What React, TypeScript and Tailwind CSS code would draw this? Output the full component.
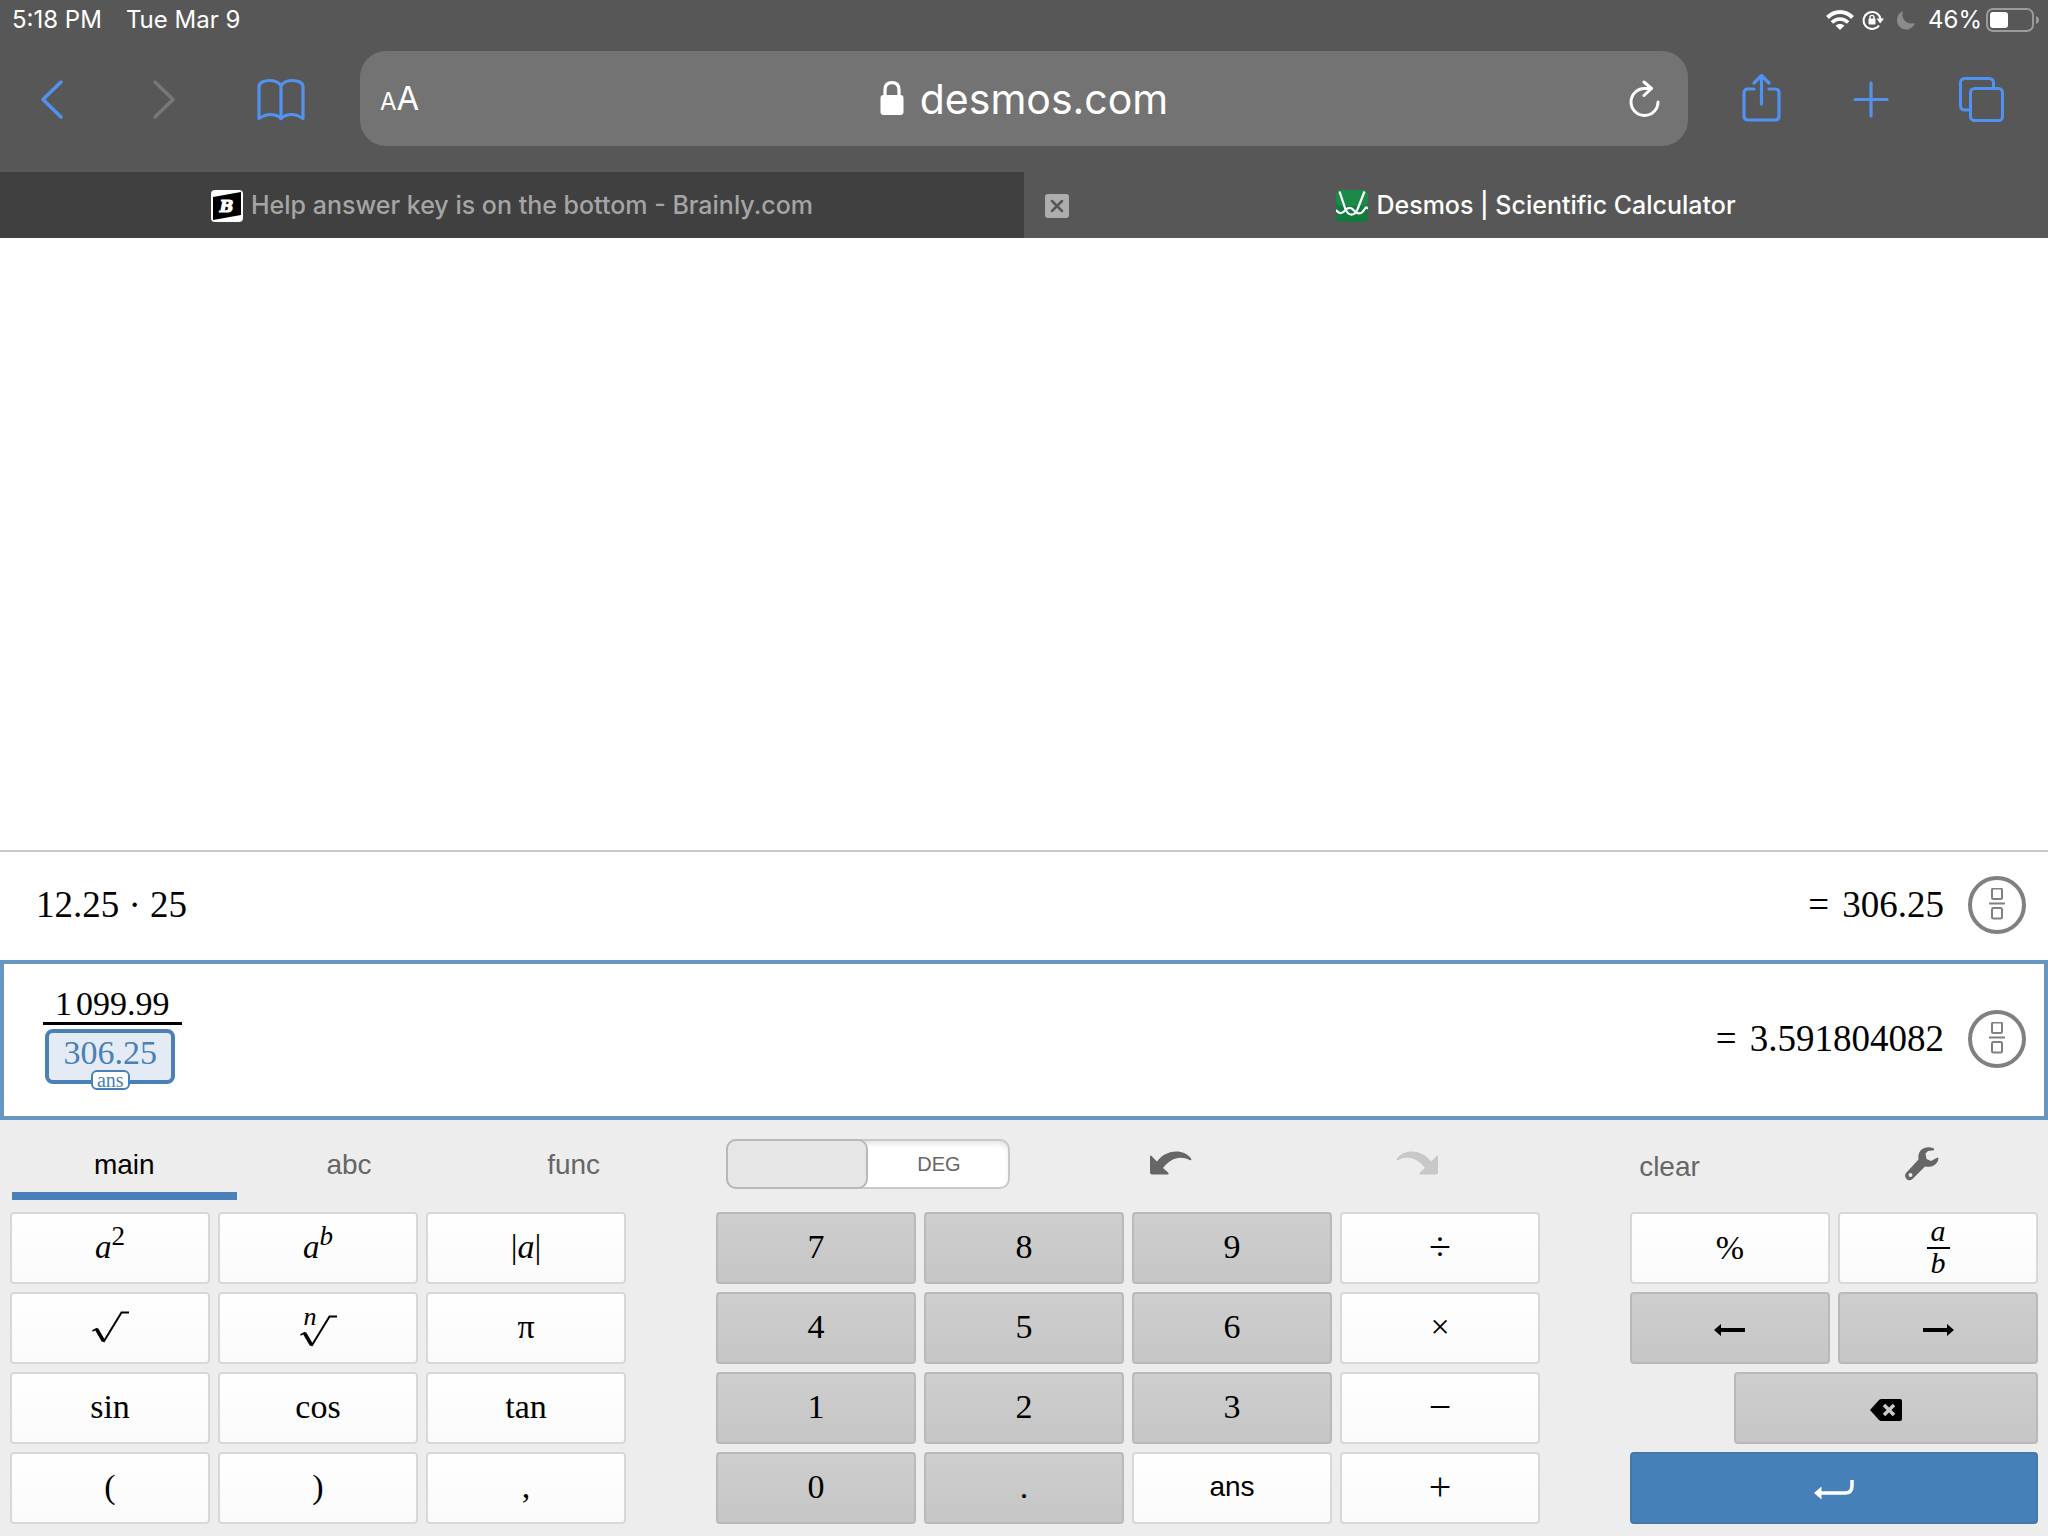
import React, { useState } from 'react';

interface CalcKey {
    label: React.ReactNode;
    name: string;
    variant?: 'light' | 'dark' | 'primary';
    className?: string;
}

interface KeyButtonProps {
    item: CalcKey;
}

const keyStyles = {
    light: 'border-[#d8d8d8] bg-linear-to-b from-white to-[#fafafa] text-black',
    dark: 'border-[#b9b9b9] bg-linear-to-b from-[#cecece] to-[#c6c6c6] text-black',
    primary: 'border-[#4478ab] bg-[#4580b9] text-white',
};

// ---------------Icons---------------//
const BackIcon = () => (
    <svg width="48" height="48" viewBox="0 0 48 48" fill="none" stroke="currentColor" strokeWidth="3.500" strokeLinecap="round" strokeLinejoin="round">
        <path d="M33 7 15 24.500 33 42" />
    </svg>
);

const ForwardIcon = () => (
    <svg width="48" height="48" viewBox="0 0 48 48" fill="none" stroke="currentColor" strokeWidth="3.500" strokeLinecap="round" strokeLinejoin="round">
        <path d="M12 7 30 24.500 12 42" />
    </svg>
);

const BookIcon = () => (
    <svg width="48" height="48" viewBox="0 0 48 48" fill="none" stroke="currentColor" strokeWidth="3.200" strokeLinejoin="round">
        <path d="M24 10.500C21.500 7 17.500 5.500 12.500 5.500 7.500 5.500 2 7.500 2 11.500V43.500C6 41 9 39.500 13 39.500 18 39.500 21.500 41 24 43.500 26.500 41 30 39.500 35 39.500 39 39.500 42 41 46 43.500V11.500C46 7.500 40.500 5.500 35.500 5.500 30.500 5.500 26.500 7 24 10.500ZM24 10.500V43.500" />
    </svg>
);

const ShareIcon = () => (
    <svg width="48" height="52" viewBox="0 0 48 52" fill="none" stroke="currentColor" strokeWidth="3.200" strokeLinecap="round" strokeLinejoin="round">
        <path d="M16 16H10Q6 16 6 20V43Q6 47 10 47H37Q41 47 41 43V20Q41 16 37 16H31" />
        <path d="M23.500 31V2.500M16 10 23.500 2.500 31 10" />
    </svg>
);

const PlusIcon = () => (
    <svg width="48" height="48" viewBox="0 0 48 48" fill="none" stroke="currentColor" strokeWidth="3.200" strokeLinecap="round">
        <path d="M23 8V41M7 24.500H39" />
    </svg>
);

const TabsIcon = () => (
    <svg width="48" height="48" viewBox="0 0 48 48" fill="none" stroke="currentColor" strokeWidth="3">
        <path d="M12 35H7Q2.500 35 2.500 30.500V8Q2.500 3.500 7 3.500H31Q35.500 3.500 35.500 8V13" />
        <rect x="12.500" y="13.500" width="32" height="32" rx="4" />
    </svg>
);

const LockIcon = () => (
    <svg width="24" height="36" viewBox="0 0 24 36">
        <path d="M5 16V9C5 4 8 1.700 12 1.700S19 4 19 9V16" fill="none" stroke="white" strokeWidth="3.200" />
        <rect x="0.500" y="14" width="23" height="20" rx="3" fill="white" />
    </svg>
);

const ReloadIcon = () => (
    <svg width="32" height="38" viewBox="0 0 32 38" fill="none" stroke="white" strokeWidth="3" strokeLinecap="round" strokeLinejoin="round">
        <path d="M30 22A13.500 13.500 0 1 1 16.500 8.500H23" />
        <path d="M16 2 23.500 8.500 16 15.500" />
    </svg>
);

const WifiIcon = () => (
    <svg width="28" height="22" viewBox="0 0 28 22" fill="none" stroke="white" strokeWidth="4">
        <path d="M1.500 8.500C8.500 1.200 19.500 1.200 26.500 8.500" />
        <path d="M6 13.500C10.500 8.800 17.500 8.800 22 13.500" strokeWidth="3.600" />
        <path d="M14 21 9.500 16.500C12 14.400 16 14.400 18.500 16.500Z" fill="white" stroke="none" />
    </svg>
);

const RotationLockIcon = () => (
    <svg width="22" height="20" viewBox="0 0 22 20" fill="none">
        <path d="M17 15.500A8.500 8.500 0 1 1 18.500 9" stroke="white" strokeWidth="2" />
        <path d="M14.500 8.500H22L18.200 13.500Z" fill="white" />
        <rect x="6.500" y="8.500" width="7" height="6" rx="1" fill="white" />
        <path d="M8 9V7.500C8 4.700 12 4.700 12 7.500V9" stroke="white" strokeWidth="1.400" />
    </svg>
);

const MoonIcon = () => (
    <svg width="20" height="20" viewBox="0 0 20 20">
        <path d="M7 1C4.500 8.500 10.500 15.500 19 13 17.500 17 14 19.500 10.200 19.500 5 19.500 1 15.500 1 10.300 1 6 3.300 2.500 7 1Z" fill="#8b8b8b" />
    </svg>
);

const BatteryIcon = () => (
    <svg width="54" height="24" viewBox="0 0 54 24">
        <rect x="1" y="1" width="46" height="22" rx="6" fill="none" stroke="#9a9a9a" strokeWidth="2" />
        <rect x="4" y="4" width="18" height="16" rx="3" fill="white" />
        <path d="M50 8Q53 9 53 12T50 16Z" fill="#9a9a9a" />
    </svg>
);

const BrainlyIcon = () => (
    <svg width="32" height="32" viewBox="0 0 32 32">
        <rect width="32" height="32" rx="4" fill="white" />
        <path d="M2 7 30 2V25L2 30Z" fill="black" />
        <text x="15.500" y="22" textAnchor="middle" fill="white" stroke="white" strokeWidth="1.200" fontSize="16" fontWeight="bold" fontStyle="italic" fontFamily="DejaVu Serif, serif">B</text>
    </svg>
);

const DesmosIcon = () => (
    <svg width="32" height="32" viewBox="0 0 32 32" fill="none">
        <rect width="32" height="32" rx="5" fill="#127a3c" />
        <rect width="32" height="16" rx="5" fill="#1b8a48" />
        <path d="M3.500 1.500 9 18C12 26.500 19 27 22 18L28.500 1.500" stroke="white" strokeWidth="2.200" />
        <path d="M0 20C3 24 6 24 9 20.500S15 17 18 20.500 25 25 28 20 30.500 18.500 32 18" stroke="white" strokeWidth="2.200" />
    </svg>
);

const CloseTabIcon = () => (
    <svg width="24" height="24" viewBox="0 0 24 24">
        <rect width="24" height="24" rx="3" fill="#adadad" />
        <path d="M7 7 17 17M17 7 7 17" stroke="#575757" strokeWidth="2.500" strokeLinecap="round" />
    </svg>
);

const FractionIcon = () => (
    <svg width="18" height="34" viewBox="0 0 18 34" fill="none" stroke="#808080" strokeWidth="2">
        <rect x="4" y="0.500" width="10" height="10.500" rx="1.500" />
        <path d="M1 15.500H17" />
        <rect x="4" y="20" width="10" height="10.500" rx="1.500" />
    </svg>
);

const UndoIcon = () => (
    <svg width="42" height="32" viewBox="0 0 42 32" fill="currentColor">
        <path d="M0 6.500Q0 5 1.500 6L7 11.500C16-1 34-1.500 41 8.500 42 10 41 10.800 39.500 10 30 5 20 8.500 13 18L18 22.500Q19.500 24.500 17.500 24.500H2Q0 24.500 0 22.500Z" />
    </svg>
);

const RedoIcon = () => (
    <svg width="42" height="32" viewBox="0 0 42 32" fill="currentColor">
        <path d="M42 6.500Q42 5 40.500 6L35 11.500C26-1 8-1.500 1 8.500 0 10 1 10.800 2.500 10 12 5 22 8.500 29 18L24 22.500Q22.500 24.500 24.500 24.500H40Q42 24.500 42 22.500Z" />
    </svg>
);

const WrenchIcon = () => (
    <svg width="36" height="36" viewBox="0 0 36 36" fill="currentColor" fillRule="evenodd">
        <path d="M30 2.500C22-1 13 3 14.500 13.500L2 27C-1 30.500 4 36.500 8 33.500L21 20.500C28 22 34 18 34.500 12.500Q34 11 32.500 12L27 15 22.500 13 21.500 7.500 24 5 30 4.300ZM6.500 27A2 2 0 1 0 6.500 31 2 2 0 1 0 6.500 27Z" />
    </svg>
);

const RootIcon = () => (
    <svg width="37" height="32" viewBox="0 0 37 32" fill="none" stroke="currentColor">
        <path d="M0.500 20 5 17.500" strokeWidth="1.500" />
        <path d="M4.500 18 11.500 30" strokeWidth="3.500" />
        <path d="M11.500 31 29.500 1.500H37" strokeWidth="2" />
    </svg>
);

const ArrowIcon = ({ flip }: { flip?: boolean }) => (
    <svg width="32" height="14" viewBox="0 0 32 14" fill="currentColor">
        <path d={flip ? 'M32 7 25 1V5H1V9H25V13Z' : 'M0 7 7 1V5H31V9H7V13Z'} />
    </svg>
);

const BackspaceIcon = () => (
    <svg width="32" height="22" viewBox="0 0 32 22">
        <path d="M0 11 9 1Q10 0 11.500 0H30Q32 0 32 2V20Q32 22 30 22H11.500Q10 22 9 21Z" fill="black" />
        <path d="M14 6 24 16M24 6 14 16" stroke="#cacaca" strokeWidth="3.500" />
    </svg>
);

const EnterIcon = () => (
    <svg width="40" height="20" viewBox="0 0 40 20">
        <path d="M5 13H31Q38 13 38 6V0" fill="none" stroke="white" strokeWidth="3.500" />
        <path d="M0 13 7.500 6.500V19.500Z" fill="white" />
    </svg>
);

// ---------------Key Data---------------//
const italic = 'text-[33px] italic leading-9';
const operator = 'text-[40px]';

const mainKeys: CalcKey[] = [
    { name: 'a squared', label: <span className={italic}>a<sup className="text-[27px] not-italic">2</sup></span> },
    { name: 'a to the b', label: <span className={italic}>a<sup className="text-[27px]">b</sup></span> },
    { name: 'absolute value', label: <span>|<i>a</i>|</span> },
    { name: 'square root', label: <RootIcon /> },
    {
        name: 'nth root',
        label: (
            <span className="relative pt-2">
                <i className="absolute left-1 -top-1 text-[26px] leading-7">n</i>
                <RootIcon />
            </span>
        ),
    },
    { name: 'pi', label: 'π' },
    { name: 'sin', label: 'sin' },
    { name: 'cos', label: 'cos' },
    { name: 'tan', label: 'tan' },
    { name: 'left parenthesis', label: '(' },
    { name: 'right parenthesis', label: ')' },
    { name: 'comma', label: ',' },
];

const numberKeys: CalcKey[] = [
    { name: '7', label: '7', variant: 'dark' },
    { name: '8', label: '8', variant: 'dark' },
    { name: '9', label: '9', variant: 'dark' },
    { name: 'divide', label: <span className={operator}>÷</span> },
    { name: '4', label: '4', variant: 'dark' },
    { name: '5', label: '5', variant: 'dark' },
    { name: '6', label: '6', variant: 'dark' },
    { name: 'multiply', label: '×' },
    { name: '1', label: '1', variant: 'dark' },
    { name: '2', label: '2', variant: 'dark' },
    { name: '3', label: '3', variant: 'dark' },
    { name: 'minus', label: <span className={operator}>−</span> },
    { name: '0', label: '0', variant: 'dark' },
    { name: 'decimal point', label: '.', variant: 'dark' },
    { name: 'ans', label: <span className="font-['Liberation_Sans',sans-serif] text-[28px]">ans</span> },
    { name: 'plus', label: <span className={operator}>+</span> },
];

const actionKeys: CalcKey[] = [
    { name: 'percent', label: '%', className: 'col-span-2' },
    {
        name: 'fraction',
        label: (
            <span className="flex flex-col items-center text-[30px] italic leading-7">
                <span className="border-b-2 border-black px-1 pb-1 leading-6">a</span>
                <span>b</span>
            </span>
        ),
        className: 'col-span-2',
    },
    { name: 'left', label: <ArrowIcon />, variant: 'dark', className: 'col-span-2 pt-1' },
    { name: 'right', label: <ArrowIcon flip />, variant: 'dark', className: 'col-span-2 pt-1' },
    { name: 'backspace', label: <BackspaceIcon />, variant: 'dark', className: 'col-start-2 col-span-3 pt-1' },
    { name: 'enter', label: <EnterIcon />, variant: 'primary', className: 'col-span-4 pt-1' },
];

const KeyButton: React.FC<KeyButtonProps> = ({ item }) => (
    <button
        type="button"
        aria-label={item.name}
        className={`flex h-[72px] items-center justify-center rounded-sm border-2 font-['Liberation_Serif',serif] text-[34px] leading-10 ${keyStyles[item.variant ?? 'light']} ${item.className ?? 'pb-[2px]'}`}
    >
        {item.label}
    </button>
);

const FractionToggle = () => (
    <button type="button" aria-label="Show as fraction" className="flex size-[58px] items-center justify-center rounded-full border-4 border-[#808080]">
        <FractionIcon />
    </button>
);

const App: React.FC = () => {
    // ---------------UseState Variable---------------//
    const [url, setUrl] = useState('desmos.com');
    const [activeTab, setActiveTab] = useState('main');
    const [degrees, setDegrees] = useState(true);

    return (
        <div className="flex min-h-screen flex-col bg-white font-['Inter',sans-serif]">
            <header className="bg-[#575757] text-white">
                {/* Status bar */}
                <div className="flex h-10 items-center justify-between pl-3 pr-2 text-2xl leading-7">
                    <div className="flex gap-6">
                        <span>5:18 PM</span>
                        <span>Tue Mar 9</span>
                    </div>
                    <div className="flex items-center">
                        <WifiIcon />
                        <span className="ml-2"><RotationLockIcon /></span>
                        <span className="ml-3"><MoonIcon /></span>
                        <span className="ml-3 mr-1">46%</span>
                        <BatteryIcon />
                    </div>
                </div>

                {/* Toolbar */}
                <div className="flex h-[132px] items-start pt-[11px]">
                    <div className="flex h-[95px] w-[360px] items-center justify-between pl-7 pr-[55px] text-[#5192f0]">
                        <button type="button" aria-label="Back"><BackIcon /></button>
                        <button type="button" aria-label="Forward" className="text-[#777777]"><ForwardIcon /></button>
                        <button type="button" aria-label="Bookmarks"><BookIcon /></button>
                    </div>
                    <div className="flex h-[95px] flex-1 items-center justify-between rounded-[26px] bg-[#737373] pl-5 pr-7">
                        <button type="button" aria-label="Page settings" className="w-16 pt-1 text-left leading-10">
                            <span className="text-2xl">A</span>
                            <span className="text-[33px]">A</span>
                        </button>
                        <label className="flex items-center gap-4">
                            <LockIcon />
                            <input
                                type="text"
                                aria-label="Address"
                                value={url}
                                onChange={(event) => setUrl(event.target.value)}
                                className="field-sizing-content text-[41px] leading-[52px] outline-none"
                            />
                        </label>
                        <button type="button" aria-label="Reload" className="flex w-14 justify-end"><ReloadIcon /></button>
                    </div>
                    <div className="flex h-[95px] w-[360px] items-center gap-[62px] pl-[50px] text-[#5192f0]">
                        <button type="button" aria-label="Share"><ShareIcon /></button>
                        <button type="button" aria-label="New tab"><PlusIcon /></button>
                        <button type="button" aria-label="Tabs"><TabsIcon /></button>
                    </div>
                </div>

                {/* Browser tabs */}
                <nav className="grid h-[66px] grid-cols-2 text-[25px] font-medium">
                    <a href="#brainly" className="flex items-center justify-center gap-2 bg-[#404040] pt-[2px] text-[#a5a5a5]">
                        <BrainlyIcon />
                        Help answer key is on the bottom - Brainly.com
                    </a>
                    <div className="relative flex items-center justify-center pt-[2px]">
                        <button type="button" aria-label="Close tab" className="absolute left-[21px]"><CloseTabIcon /></button>
                        <a href="#desmos" className="flex items-center gap-2">
                            <DesmosIcon />
                            Desmos | Scientific Calculator
                        </a>
                    </div>
                </nav>
            </header>

            {/* Expressions */}
            <main className="flex flex-1 flex-col justify-end font-['Liberation_Serif',serif] text-[37px] leading-10 text-black">
                <div className="flex h-[110px] items-center justify-between border-t-2 border-[#c8c8c8] pb-[2px] pl-9 pr-[22px]">
                    <span>12.25 · 25</span>
                    <div className="flex items-center gap-6">
                        <span><span className="mr-1">=</span> 306.25</span>
                        <FractionToggle />
                    </div>
                </div>
                <div className="flex h-40 items-center justify-between border-4 border-[#6796c3] pb-[2px] pl-[39px] pr-[18px]">
                    <div className="flex flex-col items-center pb-2 text-[34px]">
                        <span className="border-b-[3px] border-black px-3 leading-9">
                            1<span className="ml-1">099.99</span>
                        </span>
                        <span className="relative mt-1 mr-1 flex h-[55px] w-[130px] justify-center rounded-lg border-4 border-[#4a80b6] bg-[#e4ebf4] text-[#4a80b6]">
                            306.25
                            <span className="absolute -bottom-[10px] rounded-md border-2 border-[#4a80b6] bg-white px-1 text-xl leading-4">ans</span>
                        </span>
                    </div>
                    <div className="flex items-center gap-6">
                        <span><span className="mr-1">=</span> 3.591804082</span>
                        <FractionToggle />
                    </div>
                </div>
            </main>

            {/* Keypad */}
            <section className="bg-[#ededed] px-[10px] pb-3 font-['Liberation_Sans',sans-serif] text-[28px] text-[#666666]">
                <div className="grid h-[92px] grid-cols-[616fr_824fr_408fr] gap-x-[90px]">
                    <div className="-mr-[60px] ml-[2px] grid grid-cols-3 pb-3">
                        {['main', 'abc', 'func'].map((tab) => (
                            <button
                                key={tab}
                                type="button"
                                onClick={() => setActiveTab(tab)}
                                className={`border-b-8 pt-[18px] ${activeTab === tab ? 'border-[#4a80b9] text-black' : 'border-transparent'}`}
                            >
                                {tab}
                            </button>
                        ))}
                    </div>
                    <div className="flex items-center pb-1 pl-[10px]">
                        <button
                            type="button"
                            role="switch"
                            aria-label="Degrees"
                            aria-checked={degrees}
                            onClick={() => setDegrees(!degrees)}
                            className={`flex h-[50px] w-[284px] rounded-[10px] bg-white text-xl shadow-[inset_0_0_0_2px_#c8c8c8,inset_0_4px_6px_#dddddd] ${degrees ? '' : 'flex-row-reverse'}`}
                        >
                            <span className="h-full w-1/2 rounded-[10px] border-2 border-[#b8b8b8] bg-[#e6e6e6]" />
                            <span className="w-1/2 self-center">{degrees ? 'DEG' : 'RAD'}</span>
                        </button>
                        <button type="button" aria-label="Undo" className="ml-[38px] flex flex-1 justify-center pt-1"><UndoIcon /></button>
                        <button type="button" aria-label="Redo" className="flex flex-1 justify-center pt-1 text-[#c8c8c8]"><RedoIcon /></button>
                    </div>
                    <div className="-ml-[86px] -mr-[10px] grid grid-cols-[254fr_256fr] items-center">
                        <button type="button" className="pt-[2px]">clear</button>
                        <button type="button" aria-label="Settings" className="flex justify-center pb-1"><WrenchIcon /></button>
                    </div>
                </div>
                <div className="grid grid-cols-[616fr_824fr_408fr] gap-x-[90px]">
                    <div className="grid grid-cols-3 gap-2">
                        {mainKeys.map((item) => <KeyButton key={item.name} item={item} />)}
                    </div>
                    <div className="grid grid-cols-4 gap-2">
                        {numberKeys.map((item) => <KeyButton key={item.name} item={item} />)}
                    </div>
                    <div className="grid grid-cols-4 gap-2">
                        {actionKeys.map((item) => <KeyButton key={item.name} item={item} />)}
                    </div>
                </div>
            </section>
        </div>
    );
};

export default App;
